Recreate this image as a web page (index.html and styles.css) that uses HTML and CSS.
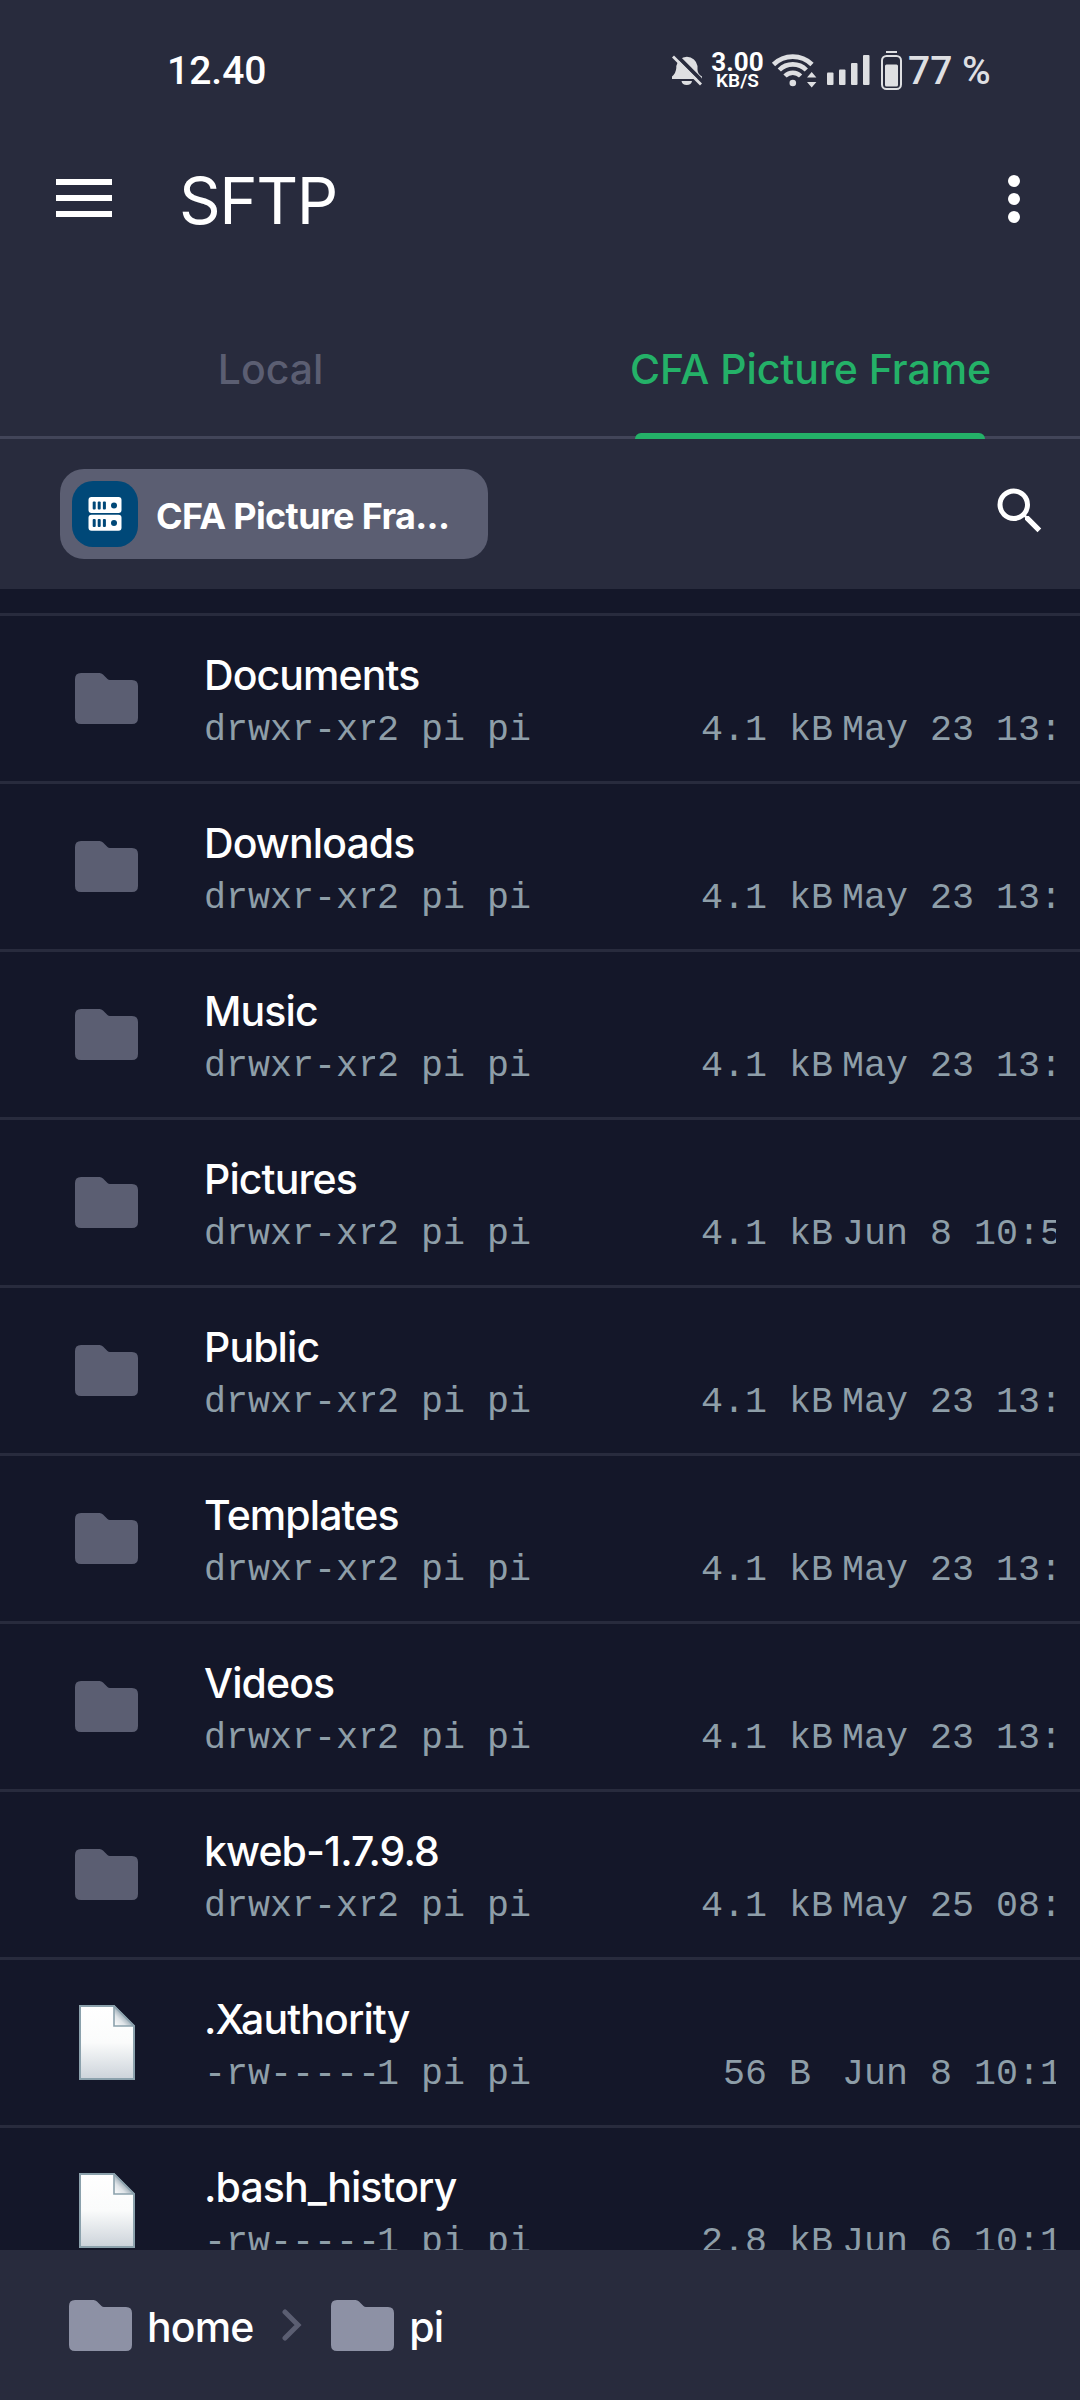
FILE: index.html
```
<!DOCTYPE html>
<html lang="en">
<head>
<meta charset="utf-8">
<title>SFTP</title>
<link rel="stylesheet" href="styles.css">
</head>
<body>
<svg class="defs" width="0" height="0" aria-hidden="true">
  <defs>
    <linearGradient id="paper" x1="0" y1="0" x2="0" y2="1">
      <stop offset="0" stop-color="#ffffff"/><stop offset=".5" stop-color="#fafbfb"/><stop offset="1" stop-color="#ccd3da"/>
    </linearGradient>
    <linearGradient id="fold" x1="0" y1="1" x2=".6" y2=".4">
      <stop offset="0" stop-color="#ffffff"/><stop offset=".5" stop-color="#dfe4e8"/><stop offset="1" stop-color="#8397a3"/>
    </linearGradient>
    <symbol id="folder" viewBox="0 0 63 51">
      <path d="M6 0H24.500Q26.500 0 28 1.500L32.500 6Q33.500 7 35 7H57Q63 7 63 13V45Q63 51 57 51H6Q0 51 0 45V6Q0 0 6 0Z" fill="currentColor"/>
    </symbol>
    <symbol id="file" viewBox="0 0 56 75">
      <path d="M1 1H35L55 21V74H1Z" fill="url(#paper)" stroke="#8ba1ac" stroke-width="2"/>
      <path d="M35 1V21H55Z" fill="url(#fold)" stroke="#8ba1ac" stroke-width="1.600"/>
    </symbol>
  </defs>
</svg>

<div class="screen">
  <header class="top">
    <div class="status">
      <span class="clock">12.40</span>
      <div class="indicators">
        <svg class="bell" width="30" height="31" viewBox="0 0 30 31">
          <path d="M0 24V21.500Q4 18 4.300 13V11A10.700 10.700 0 0 1 25.500 11V15Q25.800 19 30 21.500V24Z" fill="#dedfe2"/>
          <path d="M9.500 26H20A5.300 4.600 0 0 1 9.500 26Z" fill="#dedfe2"/>
          <path d="M2 -2L32 28" stroke="#282b3d" stroke-width="4"/>
          <path d="M1 1.500L29 29.500" stroke="#dedfe2" stroke-width="2.800"/>
        </svg>
        <div class="speed"><span class="rate">3.00</span><span class="unit">KB/S</span></div>
        <svg class="wifi" width="46" height="36" viewBox="0 0 46 36">
          <g fill="none" stroke="#dedfe2" stroke-width="4.600">
            <path d="M1.500 12.500A27.500 27.500 0 0 1 40 12.500"/>
            <path d="M7.300 18A19 19 0 0 1 34.300 18"/>
            <path d="M13 24A11 11 0 0 1 28.600 24"/>
          </g>
          <circle cx="20.800" cy="31" r="3.300" fill="#dedfe2"/>
          <path d="M35 25.500L39.700 20L44.400 25.500ZM35 30L39.700 35.500L44.400 30Z" fill="#dedfe2"/>
        </svg>
        <svg class="signal" width="43" height="30" viewBox="0 0 43 30">
          <g fill="#dedfe2">
            <rect x="0" y="17.500" width="6.500" height="12.500" rx="1"/>
            <rect x="12" y="14.500" width="6.500" height="15.500" rx="1"/>
            <rect x="24" y="8" width="6.500" height="22" rx="1"/>
            <rect x="36" y="0" width="6.500" height="30" rx="1"/>
          </g>
        </svg>
        <svg class="battery" width="21" height="39" viewBox="0 0 21 39">
          <rect x="5" y="0" width="11" height="2" fill="#dedfe2"/>
          <rect x="1" y="5" width="19" height="33" rx="4.500" fill="none" stroke="#dedfe2" stroke-width="2"/>
          <rect x="4" y="13.500" width="13" height="22" rx="1.500" fill="#dedfe2"/>
        </svg>
        <span class="percent">77 %</span>
      </div>
    </div>

    <div class="appbar">
      <svg width="56" height="38" viewBox="0 0 56 38"><path d="M0 3H56M0 19H56M0 35H56" stroke="#fff" stroke-width="6"/></svg>
      <h1 class="title">SFTP</h1>
      <svg class="more" width="12" height="48" viewBox="0 0 12 48"><g fill="#fff"><circle cx="6" cy="6" r="6"/><circle cx="6" cy="24" r="6"/><circle cx="6" cy="42" r="6"/></g></svg>
    </div>

    <nav class="tabs">
      <div class="tab">Local</div>
      <div class="tab active">CFA Picture Frame</div>
    </nav>

    <div class="hostbar">
      <div class="chip">
        <span class="chip-icon">
          <svg width="34" height="34" viewBox="0 0 34 34">
            <rect x=".5" y="0" width="33" height="16" rx="3" fill="#fff"/>
            <rect x=".5" y="17.700" width="33" height="16" rx="3" fill="#fff"/>
            <g fill="#004878">
              <rect x="4.700" y="4.500" width="3" height="8" rx="1"/><rect x="9.700" y="4.500" width="3" height="8" rx="1"/><rect x="14.900" y="4.500" width="3" height="8" rx="1"/>
              <circle cx="26" cy="8.500" r="3"/>
              <rect x="4.700" y="22" width="3" height="8" rx="1"/><rect x="9.700" y="22" width="3" height="8" rx="1"/><rect x="14.900" y="22" width="3" height="8" rx="1"/>
              <circle cx="26" cy="26" r="3"/>
            </g>
          </svg>
        </span>
        <span class="chip-text">CFA Picture Fra...</span>
      </div>
      <svg class="search" width="60" height="60" viewBox="0 0 24 24"><path fill="#fff" d="M15.500 14h-.79l-.28-.27A6.471 6.471 0 0 0 16 9.500 6.500 6.500 0 1 0 9.500 16c1.610 0 3.090-.59 4.230-1.570l.27.28v.79l5 4.990L20.490 19l-4.990-5zm-6 0C7.010 14 5 11.990 5 9.500S7.010 5 9.500 5 14 7.010 14 9.500 11.990 14 9.500 14z"/></svg>
    </div>
  </header>

  <main class="list">
    <div class="row"><svg class="folder"><use href="#folder"/></svg><div class="name">Documents</div><div class="meta"><span class="perm">drwxr-xr</span><span>2 pi pi</span><span class="size">4.1 kB</span><span class="date">May 23 13:</span></div></div>
    <div class="row"><svg class="folder"><use href="#folder"/></svg><div class="name">Downloads</div><div class="meta"><span class="perm">drwxr-xr</span><span>2 pi pi</span><span class="size">4.1 kB</span><span class="date">May 23 13:</span></div></div>
    <div class="row"><svg class="folder"><use href="#folder"/></svg><div class="name">Music</div><div class="meta"><span class="perm">drwxr-xr</span><span>2 pi pi</span><span class="size">4.1 kB</span><span class="date">May 23 13:</span></div></div>
    <div class="row"><svg class="folder"><use href="#folder"/></svg><div class="name">Pictures</div><div class="meta"><span class="perm">drwxr-xr</span><span>2 pi pi</span><span class="size">4.1 kB</span><span class="date">Jun 8 10:5</span></div></div>
    <div class="row"><svg class="folder"><use href="#folder"/></svg><div class="name">Public</div><div class="meta"><span class="perm">drwxr-xr</span><span>2 pi pi</span><span class="size">4.1 kB</span><span class="date">May 23 13:</span></div></div>
    <div class="row"><svg class="folder"><use href="#folder"/></svg><div class="name">Templates</div><div class="meta"><span class="perm">drwxr-xr</span><span>2 pi pi</span><span class="size">4.1 kB</span><span class="date">May 23 13:</span></div></div>
    <div class="row"><svg class="folder"><use href="#folder"/></svg><div class="name">Videos</div><div class="meta"><span class="perm">drwxr-xr</span><span>2 pi pi</span><span class="size">4.1 kB</span><span class="date">May 23 13:</span></div></div>
    <div class="row"><svg class="folder"><use href="#folder"/></svg><div class="name">kweb-1.7.9.8</div><div class="meta"><span class="perm">drwxr-xr</span><span>2 pi pi</span><span class="size">4.1 kB</span><span class="date">May 25 08:</span></div></div>
    <div class="row"><svg class="file"><use href="#file"/></svg><div class="name">.Xauthority</div><div class="meta"><span class="perm">-rw-----</span><span>1 pi pi</span><span class="size">56 B</span><span class="date">Jun 8 10:1</span></div></div>
    <div class="row"><svg class="file"><use href="#file"/></svg><div class="name">.bash_history</div><div class="meta"><span class="perm">-rw-----</span><span>1 pi pi</span><span class="size">2.8 kB</span><span class="date">Jun 6 10:1</span></div></div>
  </main>

  <footer class="crumbs">
    <svg class="folder"><use href="#folder"/></svg><span class="crumb">home</span>
    <svg class="chevron" width="20" height="32" viewBox="0 0 20 32"><path d="M3 3L16 16L3 29" fill="none" stroke="#5b5e72" stroke-width="5" stroke-linecap="round"/></svg>
    <svg class="folder"><use href="#folder"/></svg><span class="crumb">pi</span>
  </footer>
</div>
</body>
</html>
```
FILE: styles.css
```
* { box-sizing: border-box; }
body { margin: 0; background: #141729; }
svg { display: block; flex: none; }
.defs { position: absolute; }

.screen {
  width: 1080px;
  height: 2400px;
  display: flex;
  flex-direction: column;
  overflow: hidden;
  background: #141729;
  color: #fff;
  font-family: Inter, sans-serif;
  font-size: 41px;
  line-height: 50px;
}

.top { background: #282b3d; flex: none; }

.status {
  height: 140px;
  padding: 0 91px 0 167px;
  display: flex;
  justify-content: space-between;
  align-items: center;
  font-family: Roboto, sans-serif;
  font-weight: 500;
  font-size: 39px;
}
.clock { margin-top: 2px; }
.indicators { display: flex; align-items: center; }
.bell { margin-right: 9px; }
.speed {
  width: 53px;
  display: flex;
  flex-direction: column;
  align-items: center;
  font-weight: 700;
}
.rate { font-size: 26px; line-height: 20px; }
.unit { font-size: 19px; line-height: 17px; font-weight: 600; }
.wifi { margin: 0 9px 0 8px; overflow: visible; }
.signal { margin-right: 11px; }
.battery { margin-right: 6px; }
.percent { width: 81px; margin-top: 2px; color: #dedfe2; white-space: nowrap; }

.appbar {
  height: 116px;
  padding: 0 60px 0 56px;
  display: flex;
  align-items: center;
}
.title {
  margin: 5px 0 0 67px;
  flex: 1;
  font-size: 65px;
  line-height: 80px;
  font-weight: 400;
  letter-spacing: -1.4px;
}
.more { margin-top: 2px; }

.tabs {
  height: 183px;
  display: grid;
  grid-template-columns: 1fr 1fr;
  border-bottom: 3px solid #424559;
}
.tab {
  position: relative;
  padding: 88px 0 0 1px;
  text-align: center;
  font-weight: 500;
  letter-spacing: -0.05px;
  color: #5b5e72;
}
.tab.active { color: #24b168; }
.tab.active::after {
  content: "";
  position: absolute;
  left: 95px;
  right: 95px;
  bottom: -3px;
  height: 6px;
  border-radius: 6px 6px 0 0;
  background: #24b168;
}

.hostbar {
  height: 150px;
  padding: 0 30px 0 60px;
  display: flex;
  justify-content: space-between;
  align-items: center;
}
.chip {
  width: 428px;
  height: 90px;
  padding-left: 12px;
  display: flex;
  align-items: center;
  border-radius: 24px;
  background: #5b5e72;
}
.chip-icon {
  width: 66px;
  height: 66px;
  display: grid;
  place-items: center;
  border-radius: 21px;
  background: #004878;
}
.chip-text {
  margin: 3px 0 0 18px;
  font-size: 36px;
  font-weight: 700;
  letter-spacing: -0.65px;
}
.search { margin-bottom: 6px; }

.list {
  flex: 1;
  min-height: 0;
  padding-top: 24px;
  overflow: hidden;
}
.row {
  height: 168px;
  padding: 34px 24px 0 75px;
  border-top: 3px solid #282b3d;
  display: grid;
  grid-template-columns: 129px 852px;
  grid-template-rows: 50px 48px;
  row-gap: 6px;
}
.folder { width: 63px; height: 51px; color: #5b5e72; }
.file { width: 56px; height: 75px; margin: 11px 0 0 4px; }
.row .folder { margin-top: 23px; }
.row .folder, .row .file { grid-row: 1 / 3; }
.name { letter-spacing: -0.9px; font-weight: 500; }
.meta {
  display: grid;
  grid-template-columns: 171px 324px 132px 225px;
  font-family: "Liberation Mono", monospace;
  font-size: 36.67px;
  line-height: 48px;
  color: #8e9ea8;
  white-space: pre;
}
.meta span:nth-child(2) { margin-left: 2px; }
.meta .size { margin-left: 2px; margin-right: -2px; text-align: center; }
.perm, .date { overflow: hidden; }
.date { margin-left: 11px; }

.crumbs {
  height: 150px;
  padding-left: 69px;
  display: flex;
  align-items: center;
  background: #282b3d;
}
.crumbs .folder { color: #8d91a5; }
.crumb { margin: 3px 0 0 15px; letter-spacing: -0.9px; font-weight: 500; }
.chevron { margin: 0 29px 0 29px; }
```
